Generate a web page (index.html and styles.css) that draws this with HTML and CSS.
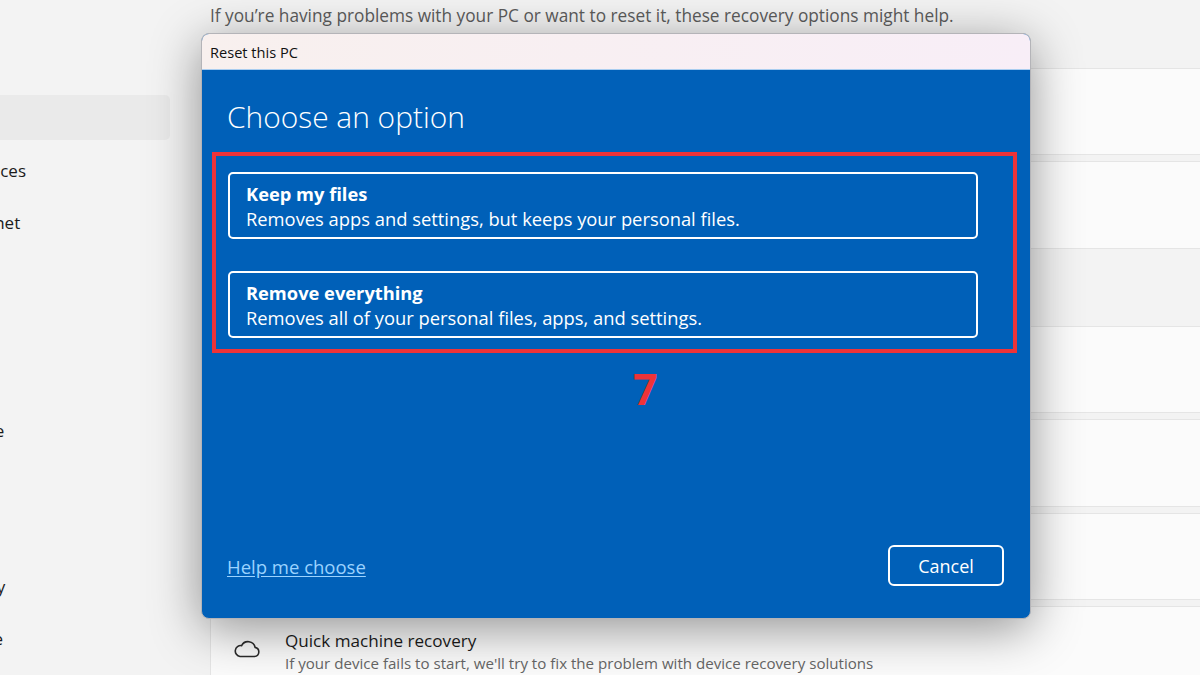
FILE: index.html
```html
<!DOCTYPE html>
<html lang="en">
<head>
  <meta charset="UTF-8">
  <meta name="viewport" content="width=device-width, initial-scale=1.0">
  <title>Reset this PC</title>
  <link rel="stylesheet" href="styles.css">
</head>
<body>
  <div class="page">
    <nav class="sidebar">
      <div class="nav-selected"></div>
      <a class="nav-link">Bluetooth &amp; devices</a>
      <a class="nav-link">Network &amp; internet</a>
      <a class="nav-link">Personalisation</a>
      <a class="nav-link">Apps</a>
      <a class="nav-link">Accounts</a>
      <a class="nav-link nav-time">Time &amp; language</a>
      <a class="nav-link">Gaming</a>
      <a class="nav-link">Accessibility</a>
      <a class="nav-link nav-privacy">Privacy &amp; security</a>
      <a class="nav-link nav-update">Windows Update</a>
    </nav>

    <main class="content">
      <p class="intro">If you’re having problems with your PC or want to reset it, these recovery options might help.</p>
      <div class="row row-first"></div>
      <div class="row"></div>
      <div class="row row-after-gap"></div>
      <div class="row"></div>
      <div class="row"></div>
      <div class="row row-quick">
        <svg class="cloud" width="28" height="20" viewBox="0 0 28 20" fill="none" stroke="#2b2b2b" stroke-width="1.6">
          <path d="M7 18.5h14.5a4.6 4.6 0 0 0 .6-9.1A7.2 7.2 0 0 0 8.6 7.6 5.5 5.5 0 0 0 7 18.5z"/>
        </svg>
        <div>
          <div class="row-title">Quick machine recovery</div>
          <div class="row-sub">If your device fails to start, we'll try to fix the problem with device recovery solutions</div>
        </div>
      </div>
    </main>
  </div>

  <!-- dialog sits over the settings page -->
  <div class="dialog">
    <div class="dialog-title">Reset this PC</div>
    <div class="dialog-body">
      <h1>Choose an option</h1>
      <div class="highlight">
        <div class="option">
          <strong>Keep my files</strong>
          <span>Removes apps and settings, but keeps your personal files.</span>
        </div>
        <div class="option">
          <strong>Remove everything</strong>
          <span>Removes all of your personal files, apps, and settings.</span>
        </div>
        <div class="step">7</div>
      </div>
      <div class="dialog-footer">
        <a class="help-link">Help me choose</a>
        <button class="cancel">Cancel</button>
      </div>
    </div>
  </div>
</body>
</html>
```

FILE: styles.css
```css
* {
  margin: 0;
  padding: 0;
  box-sizing: border-box;
}

body {
  width: 1200px;
  height: 675px;
  overflow: hidden;
  background-color: #f3f3f3;
  font-family: "Open Sans", "Liberation Sans", sans-serif;
  color: #1b1b1b;
  position: relative;
}

.page {
  display: flex;
  gap: 40px;
  height: 675px;
}

/* Sidebar, scrolled off to the left */
.sidebar {
  width: 170px;
  padding-top: 95px;
  flex-shrink: 0;
  overflow: hidden;
}

.nav-selected {
  height: 45px;
  background-color: #eaeaea;
  border-radius: 0 5px 5px 0;
  margin-bottom: 19px;
}

.nav-link {
  display: block;
  height: 52px;
  line-height: 24px;
  font-size: 17px;
  white-space: nowrap;
  margin-left: -132px;
}

.nav-time {
  margin-left: -128px;
}

.nav-privacy {
  margin-left: -134px;
}

.nav-update {
  margin-left: -132px;
}

/* Settings rows behind the dialog */
.content {
  flex: 1;
  min-width: 0;
  padding-top: 4px;
}

.intro {
  font-size: 17.25px;
  line-height: 24px;
  color: #5c5c5c;
  white-space: nowrap;
  margin-bottom: 40px;
}

.row {
  background-color: #fbfbfb;
  border: 1px solid #e5e5e5;
  border-right: none;
  border-radius: 4px 0 0 4px;
  height: 87.25px;
  margin-bottom: 6px;
}

.row-after-gap {
  margin-top: 77.5px;
}

.row-quick {
  display: flex;
  align-items: flex-start;
  gap: 24px;
  padding: 23px 0 0 22px;
  height: 90px;
  margin-bottom: 0;
}

.cloud {
  margin-top: 8px;
  flex-shrink: 0;
}

.row-title {
  font-size: 17.1px;
  line-height: 22px;
}

.row-sub {
  font-size: 15.1px;
  line-height: 22px;
  color: #666;
  white-space: nowrap;
}

/* Dialog */
.dialog {
  position: absolute;
  left: 201px;
  top: 33px;
  width: 830px;
  height: 586px;
  border: 1px solid #b4b4b8;
  border-radius: 8px;
  overflow: hidden;
  display: flex;
  flex-direction: column;
  box-shadow: 0 10px 50px rgba(0, 0, 0, 0.42);
  background-color: #0060b8;
}

.dialog-title {
  height: 36px;
  line-height: 36px;
  padding-left: 8px;
  font-size: 14.6px;
  color: #111;
  background: linear-gradient(90deg, #f8f0ee, #f8eef7);
  border-bottom: 1px solid #a9cdf0;
  flex-shrink: 0;
}

.dialog-body {
  flex: 1;
  padding: 25px 26px 32px 25px;
  display: flex;
  flex-direction: column;
  color: #fff;
}

.dialog-body h1 {
  font-size: 29.9px;
  font-weight: 300;
  line-height: 44px;
  margin-bottom: 13px;
}

.highlight {
  position: relative;
  margin: 0 -13px 0 -15px;
  height: 201px;
  border: 4px solid #ee3338;
  padding: 16px 35px 0 12px;
  display: flex;
  flex-direction: column;
  gap: 32px;
}

.option {
  height: 67px;
  border: 2px solid #fff;
  border-radius: 5px;
  padding: 7px 15px 0 16px;
  line-height: 25px;
}

.option strong {
  display: block;
  font-size: 18.3px;
  font-weight: 700;
}

.option span {
  display: block;
  font-size: 18.35px;
  white-space: nowrap;
}

.step {
  position: absolute;
  left: 417px;
  top: 203px;
  font-size: 43px;
  font-weight: 700;
  line-height: 60px;
  color: #ee3338;
}

.dialog-footer {
  margin-top: auto;
  display: flex;
  justify-content: space-between;
  align-items: flex-end;
}

.help-link {
  font-size: 18.5px;
  line-height: 24px;
  color: #9bd3ff;
  text-decoration: underline;
  text-underline-offset: 2px;
  margin-bottom: 7px;
}

.cancel {
  width: 116px;
  height: 41px;
  background: transparent;
  border: 2px solid #fff;
  border-radius: 6px;
  color: #fff;
  font-family: inherit;
  font-size: 18px;
}
```
